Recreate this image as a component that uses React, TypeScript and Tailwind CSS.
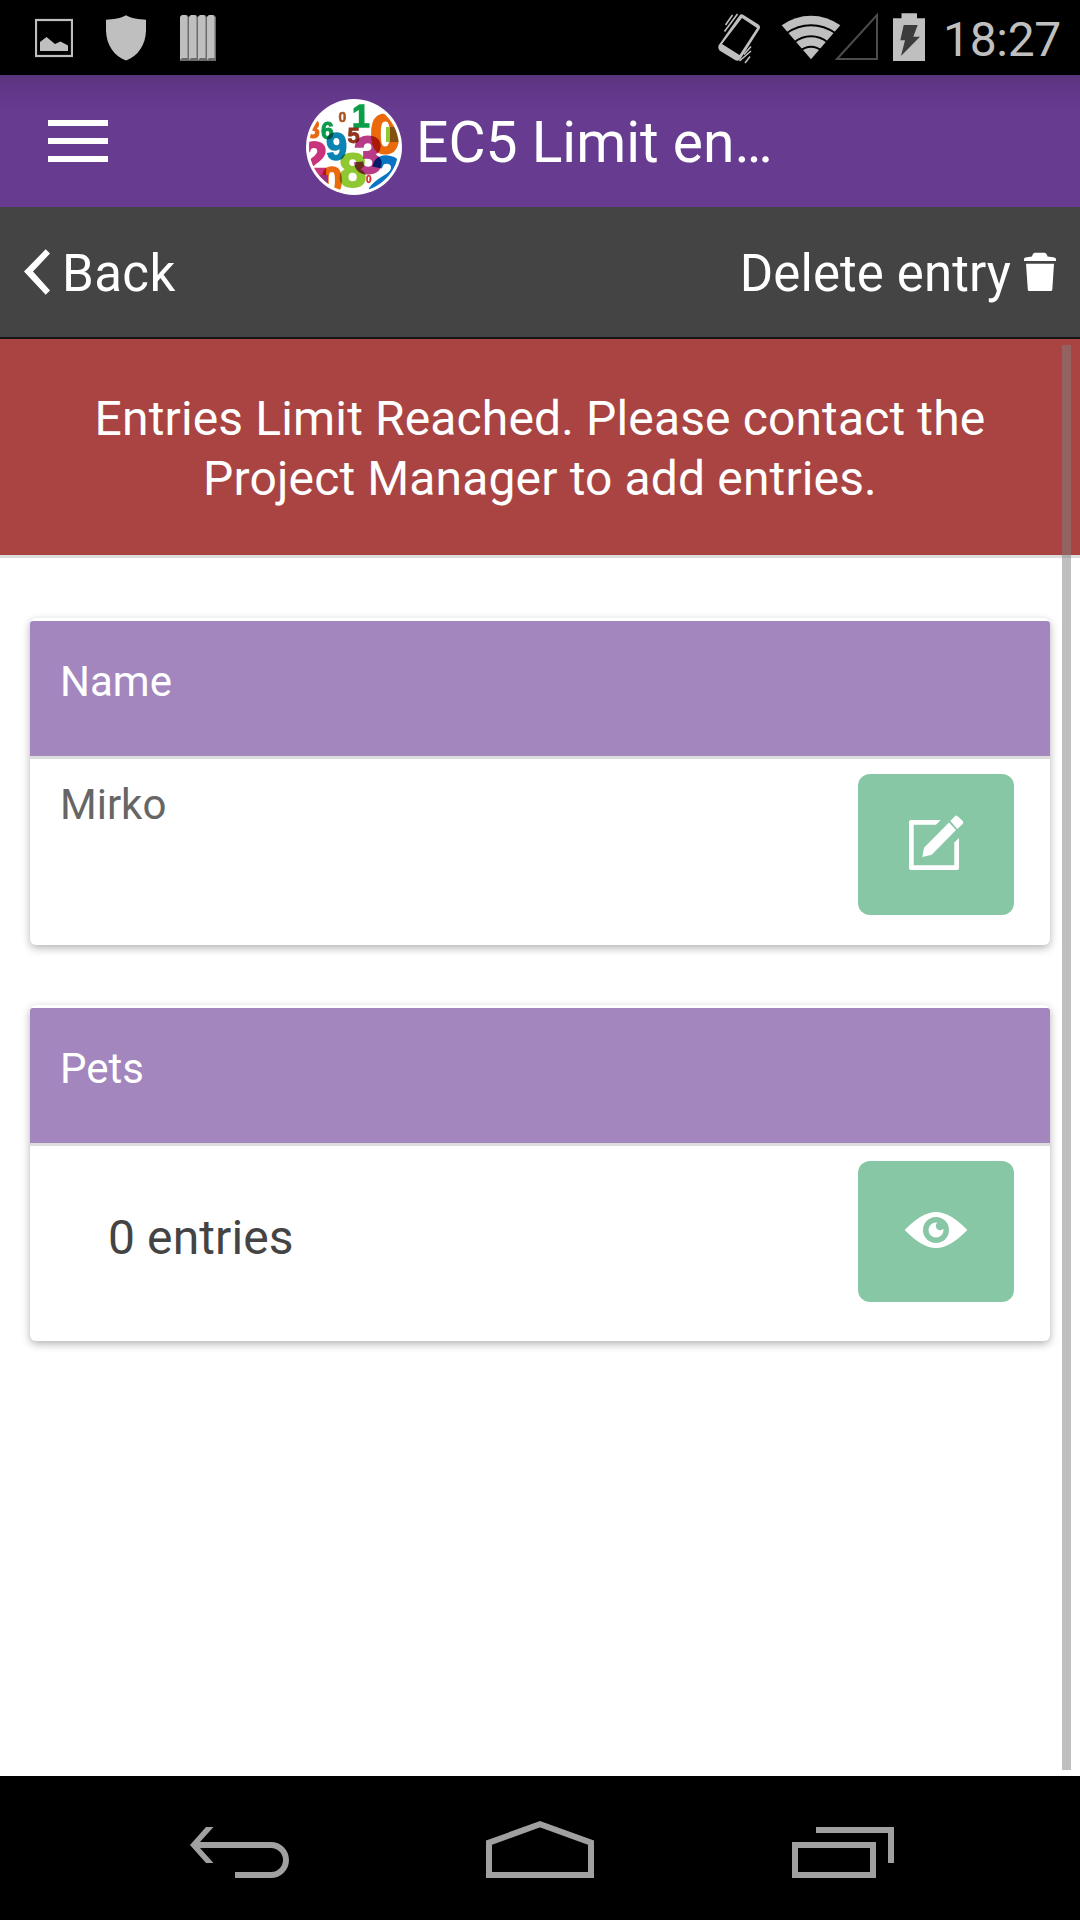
import React from "react";

function StatusBar() {
  return (
    <div className="flex h-[75px] shrink-0 items-center justify-between bg-black">
      <div className="flex pl-[35px]">
        <svg viewBox="35 15 38 46" className="h-[46px] w-[38px]">
          <rect x="36" y="20" width="36" height="36" fill="none" stroke="#bfbfbf" strokeWidth="2.2" />
          <path d="M40 42L46.5 37L55 44L60.5 41.5L68 45.5V51H40Z" fill="#bfbfbf" />
        </svg>
        <svg viewBox="106 15 40 46" className="ml-[33px] h-[46px] w-[40px]">
          <path d="M126 15.3C121 18.5 113 19.5 106 19.7V31C106.500 45 114 56 126 60.500C138 56 145.500 45 146 31V19.700C139 19.500 131 18.500 126 15.300Z" fill="#bfbfbf" />
        </svg>
        <svg viewBox="180 15 36 46" className="ml-[34px] h-[46px] w-[36px]">
          {[180, 189, 198, 207].map((x) => (
            <g key={x}>
              <path d={`M${x} 17l2-2h5l2 2v44h-9z`} fill="#6b6b6b" />
              <path d={`M${x} 17l2-2h4l1.500 2v41h-5.500l-2 2z`} fill="#bfbfbf" />
            </g>
          ))}
        </svg>
      </div>
      <div className="flex items-center pr-[19px]">
        <svg viewBox="716 10 209 54" className="h-[54px] w-[209px]">
          <path
            d="M738.500 14.500Q740 12.500 742.500 14L757.500 23.500Q760 25.500 758.500 28L739.500 58Q737 61 734 59L718.500 49.500Q716.500 47.500 717.500 44.500ZM741 17L721 43L738.500 54L756 27Z"
            fill="#bfbfbf"
            fillRule="evenodd"
          />
          <path d="M724.500 24L731.500 14M723.500 30.500L736.500 13M743 53.500L750 45.500M738.500 60L750 50M744 62L749 55.500" stroke="#bfbfbf" strokeWidth="1.600" />
          <path d="M810 58.300L780.700 24.300Q794 14.700 810 14.700Q826 14.700 839.300 24.300Z" fill="#bfbfbf" />
          <path d="M785 32.500Q797 24.300 810 24.300Q823 24.300 835 32.500M793 41.500Q801 35.300 810 35.300Q819 35.300 827 41.500M799 50Q804 45.700 810 45.700Q816 45.700 821 50" fill="none" stroke="#000" strokeWidth="2" />
          <path d="M836 58L876 14V58Z" fill="none" stroke="#4c4c4c" strokeWidth="2" />
          <path d="M892 17.300H900.500V12.300H916V17.300H924V60H892Z" fill="#bfbfbf" />
          <path d="M902.700 24H916.700L912.300 35.700H919L900 55L904 39.300H899.300Z" fill="#3c3c3c" />
        </svg>
        <span className="ml-[17px] mt-[4px] text-[48px] leading-[60px] tracking-[-0.3px] text-[#bfbfbf]">18:27</span>
      </div>
    </div>
  );
}

const digits = [
  { t: "3", x: 306, y: 138, s: 25, c: "#e8690f" },
  { t: "0", x: 338.500, y: 122, s: 14, c: "#a9551f" },
  { t: "1", x: 352, y: 126.500, s: 32, c: "#0a9e49" },
  { t: "0", x: 370, y: 153, s: 55, c: "#ea6a0c" },
  { t: "6", x: 321, y: 139, s: 23, c: "#0a9a4c" },
  { t: "5", x: 347.500, y: 143, s: 22, c: "#93341c" },
  { t: "2", x: 301, y: 174, s: 47, c: "#c9347c" },
  { t: "9", x: 326, y: 160, s: 38, c: "#0b84b4" },
  { t: "8", x: 339, y: 187, s: 49, c: "#8fc832" },
  { t: "3", x: 354, y: 173, s: 51, c: "#b83b88" },
  { t: "0", x: 321, y: 194, s: 39, c: "#ea6a0c" },
  { t: "0", x: 366, y: 183, s: 10, c: "#d62a2a" },
];

function ProjectLogo() {
  return (
    <svg viewBox="306 99 96 96" className="h-[96px] w-[96px] font-['Liberation_Sans',sans-serif] font-bold">
      <defs>
        <clipPath id="logo-disc">
          <circle cx="354" cy="147" r="45" />
        </clipPath>
      </defs>
      <circle cx="354" cy="147" r="48" fill="#fff" />
      <g clipPath="url(#logo-disc)">
        {digits.map((d, i) => (
          <text key={i} x={d.x} y={d.y} fontSize={d.s} fill={d.c} stroke={d.c} strokeWidth={d.s * 0.04} className="mix-blend-multiply">
            {d.t}
          </text>
        ))}
        <text x="370" y="196" fontSize="57" fill="#0a74c4" stroke="#0a74c4" strokeWidth="2" transform="rotate(8 385 175)" className="mix-blend-multiply">
          2
        </text>
        <rect x="386" y="127" width="4" height="15" fill="#8fc832" />
        <rect x="390" y="127" width="9" height="15" fill="#83500f" />
        <rect x="319" y="175" width="9" height="14" fill="#9c2f80" />
      </g>
    </svg>
  );
}

function Header() {
  return (
    <div className="flex h-[132px] shrink-0 items-center bg-[#673b8f] bg-[linear-gradient(to_bottom,#5a347b_0px,#61378a_16px,#673b8f_36px)] pl-[48px] text-white">
      <div className="flex w-[60px] flex-col gap-[12px]">
        <div className="h-[6px] bg-white" />
        <div className="h-[6px] bg-white" />
        <div className="h-[6px] bg-white" />
      </div>
      <div className="ml-[198px] mt-[12px]">
        <ProjectLogo />
      </div>
      <span className="ml-[14px] mt-[3px] whitespace-nowrap text-[57px] leading-[66px]">EC5 Limit en…</span>
    </div>
  );
}

function Toolbar() {
  return (
    <div className="flex h-[132px] shrink-0 items-center justify-between border-b-2 border-[#151515] bg-[#444444] pl-[24px] pr-[24px] text-[51px] leading-[60px] text-white">
      <div className="flex items-center">
        <svg viewBox="24 249 26 46" className="h-[46px] w-[26px]">
          <path d="M24 271.500L45.700 249.300L50 253.500L33 271.500L50 290.500L45.700 294.700Z" fill="#fff" />
        </svg>
        <span className="ml-[12px] mt-[3px] tracking-[0.4px]">Back</span>
      </div>
      <div className="flex items-center">
        <span className="mt-[3px] tracking-[0.1px]">Delete entry</span>
        <svg viewBox="1024 252 32 40" className="ml-[13px] h-[40px] w-[32px]">
          <path d="M1024 261V259.500Q1024 257.300 1027 257.300L1032 256.500Q1033 252.700 1035 252.700H1044.500Q1046.500 252.700 1047.500 256.500L1053 257.300Q1056 257.500 1056 259.500V261Z" fill="#fff" />
          <path d="M1026 263.700H1054L1052.300 289.500Q1052 291 1051 291H1029Q1028 291 1027.800 289.500Z" fill="#fff" />
        </svg>
      </div>
    </div>
  );
}

function Card({ title, icon, bodyClass, children }: { title: string; icon: React.ReactNode; bodyClass: string; children: React.ReactNode }) {
  return (
    <section className="rounded-[6px] bg-white pt-[3px] shadow-[0_3px_9px_rgba(0,0,0,0.3)]">
      <h2 className="h-[138px] rounded-t-[3px] border-b-[3px] border-[#dddddd] bg-[#a386bd] pl-[30px] pt-[34px] text-[42px] leading-[54px] text-white">{title}</h2>
      <div className={bodyClass}>
        {children}
        <button className="mr-[36px] mt-[15px] flex h-[141px] w-[156px] items-center justify-center rounded-[12px] bg-[#88c7a6]">{icon}</button>
      </div>
    </section>
  );
}

const editIcon = (
  <svg viewBox="908 774 56 141" className="h-[141px] w-[56px]">
    <path
      d="M940.700 820H911Q909 820 909 822V868Q909 870 911 870H957Q959 870 959 868V838L954.300 842.500V865.300H913.700V824.700H936Z"
      fill="#fff"
    />
    <path d="M922.300 857L924 847.700L949 822.500L956 830L931.700 854.700Z" fill="#fff" />
    <path d="M950.300 821L954.800 816.300Q956.200 814.800 957.700 816.300L962.700 821Q964 822.500 962.700 824L957.300 829Z" fill="#fff" />
  </svg>
);

const eyeIcon = (
  <svg viewBox="904 1161 64 141" className="h-[141px] w-[64px]">
    <path d="M904.700 1230Q922 1212 936 1212Q950 1212 967.300 1230Q950 1248 936 1248Q922 1248 904.700 1230Z" fill="#fff" />
    <circle cx="936" cy="1230" r="13" fill="#88c7a6" />
    <circle cx="936" cy="1230" r="7.500" fill="#fff" />
    <circle cx="940" cy="1226" r="4.200" fill="#88c7a6" />
  </svg>
);

function NavBar() {
  return (
    <div className="flex h-[144px] shrink-0 items-center bg-black pl-[190px]">
      <svg viewBox="190 1818 100 60" className="h-[60px] w-[100px]">
        <path d="M190 1845L206 1827H213.500L200 1842H271A18 18 0 0 1 271 1878H235V1872H271A12 12 0 0 0 271 1848H200L213.500 1863H206Z" fill="#a0a0a0" />
      </svg>
      <svg viewBox="486 1818 108 60" className="ml-[196px] h-[60px] w-[108px]">
        <path d="M489 1875V1842.700L540 1824.200L591 1842.700V1875Z" fill="none" stroke="#a0a0a0" strokeWidth="6" />
      </svg>
      <svg viewBox="792 1818 102 60" className="ml-[198px] h-[60px] w-[102px]">
        <path d="M795 1845H873V1875H795ZM816 1830H891V1863" fill="none" stroke="#a0a0a0" strokeWidth="6" />
      </svg>
    </div>
  );
}

export default function App() {
  return (
    <div className="flex h-[1920px] w-[1080px] flex-col overflow-hidden bg-white font-[Roboto,sans-serif]">
      <StatusBar />
      <Header />
      <Toolbar />
      <main className="relative flex-1">
        <div className="h-[219px] border-b-[3px] border-[#dddddd] bg-[#a94442] pt-[50px] text-center text-[48px] leading-[60px] tracking-[0.14px] text-white">
          <p>Entries Limit Reached. Please contact the</p>
          <p>Project Manager to add entries.</p>
        </div>
        <div className="flex flex-col gap-[60px] px-[30px] pt-[60px]">
          <Card title="Name" icon={editIcon} bodyClass="flex h-[186px] items-start justify-between pl-[30px]">
            <p className="pt-[19px] text-[42px] leading-[54px] text-[#666666]">Mirko</p>
          </Card>
          <Card title="Pets" icon={eyeIcon} bodyClass="flex h-[195px] items-start justify-between pl-[78px]">
            <p className="pt-[62px] text-[48px] leading-[60px] tracking-[0.1px] text-[#444444]">0 entries</p>
          </Card>
        </div>
        <div className="absolute right-[9px] top-[6px] h-[1425px] w-[9px] bg-[#808080]/50" />
      </main>
      <NavBar />
    </div>
  );
}
